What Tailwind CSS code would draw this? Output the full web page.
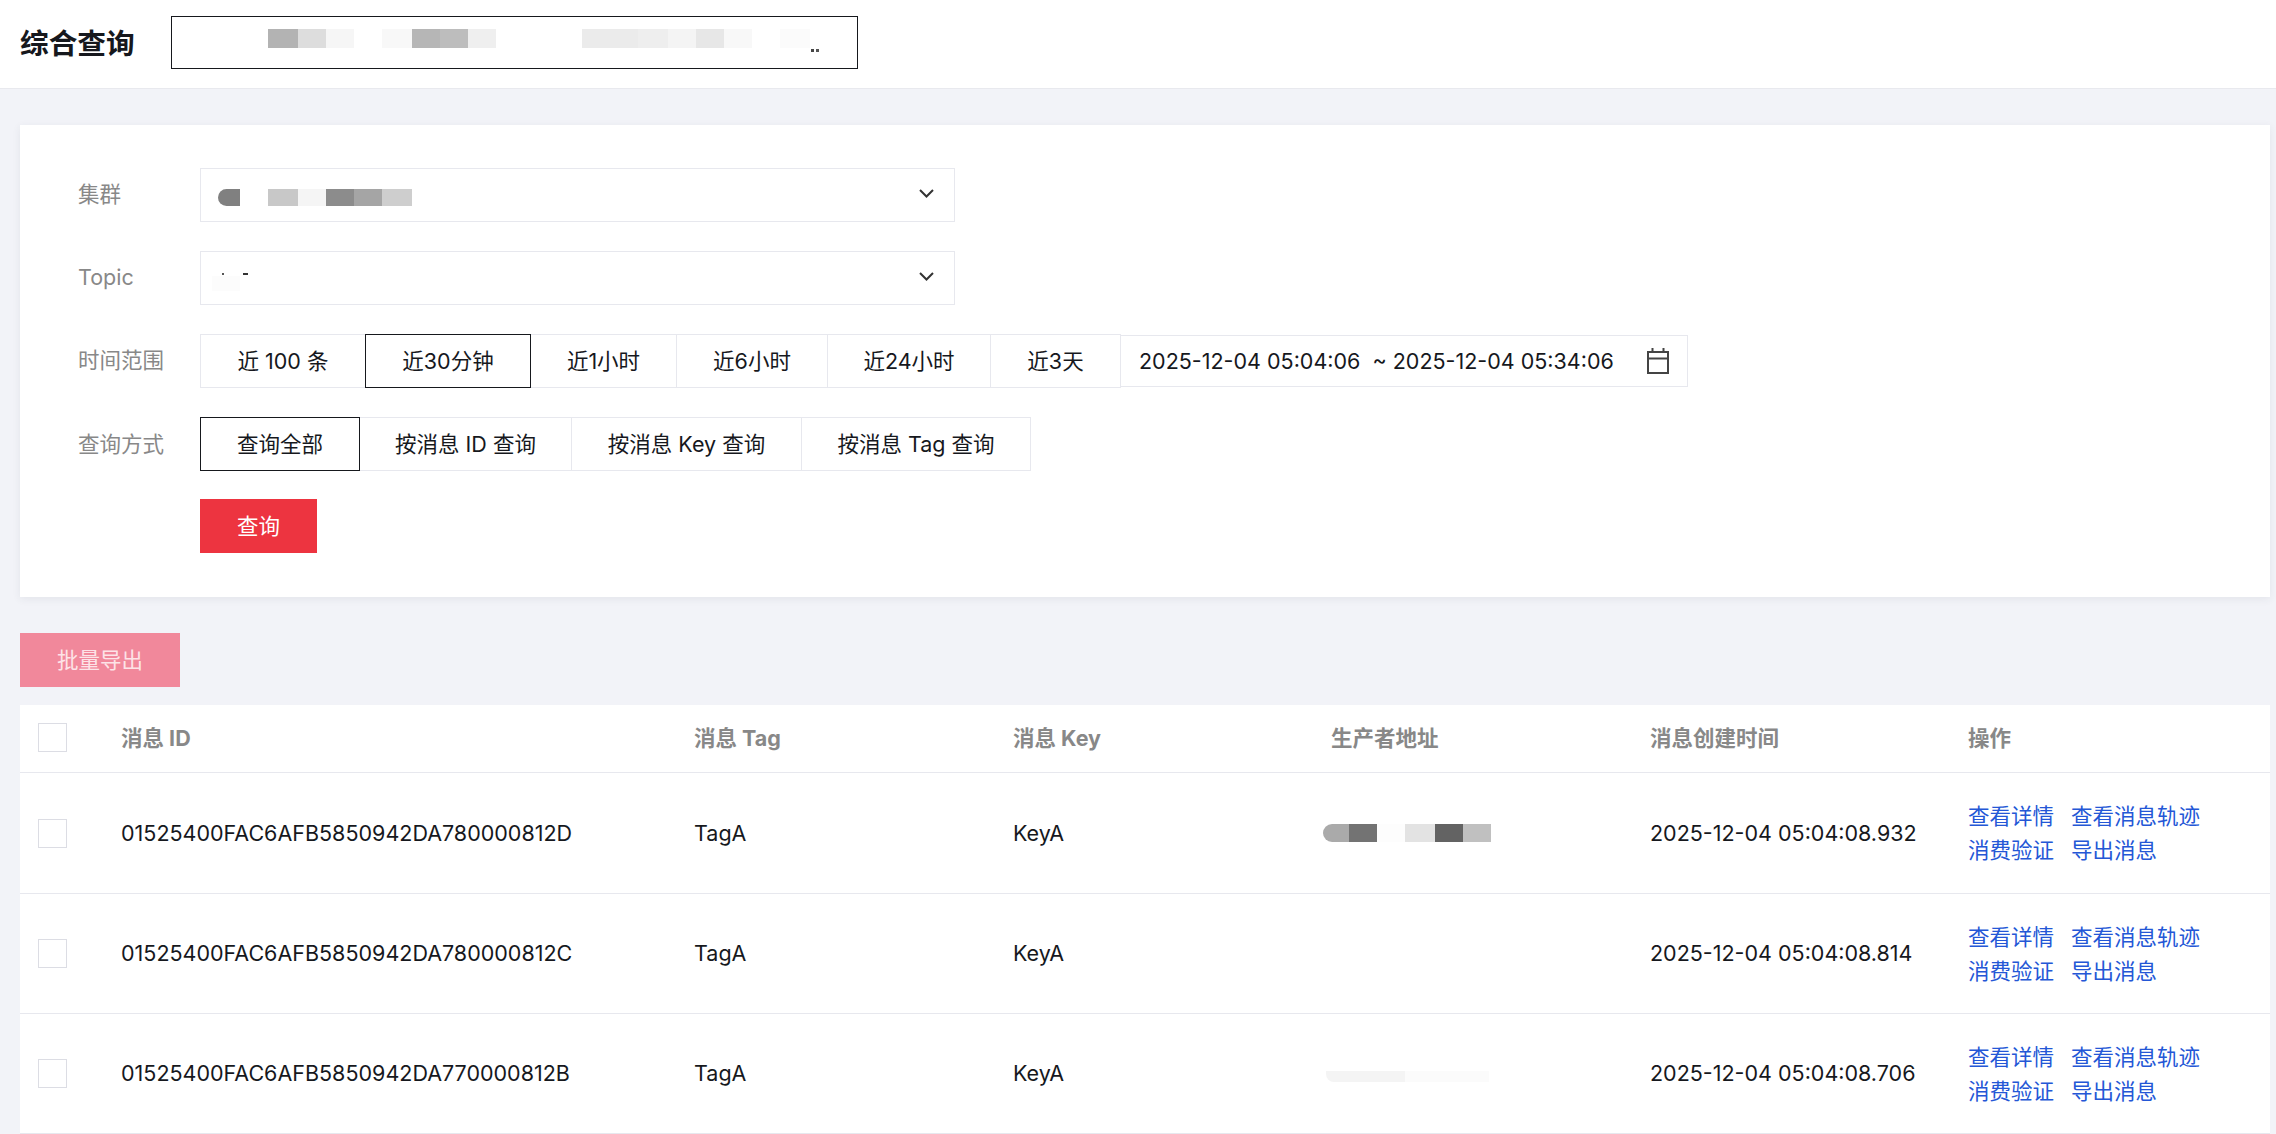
<!DOCTYPE html>
<html lang="zh-CN">
<head>
    <meta charset="UTF-8">
    <meta name="viewport" content="width=device-width, initial-scale=1.0">
    <title>综合查询</title>
    <script src="https://cdn.jsdelivr.net/npm/@tailwindcss/browser@4"></script>
</head>
<body class="bg-[#f2f3f8] h-screen overflow-hidden text-[21.5px] text-[#16181d] font-['Inter','Noto_Sans_CJK_SC',sans-serif]">
    <!-- Header -->
    <header class="h-[89px] bg-white border-b border-[#e8e9ee] pl-5 flex items-center">
        <h1 class="w-[151px] text-[28.7px] font-bold">综合查询</h1>
        <div class="relative w-[687px] h-[53px] -mt-[3px] border border-[#16181d] pl-[96px] pt-3 flex">
            <div class="flex h-[19px]">
                <div class="w-[30px] bg-[#b3b3b3]"></div>
                <div class="w-[28px] bg-[#dddddd]"></div>
                <div class="w-[28px] bg-[#f6f6f6]"></div>
                <div class="w-[28px]"></div>
                <div class="w-[30px] bg-[#f8f8f8]"></div>
                <div class="w-[28px] bg-[#b6b6b6]"></div>
                <div class="w-[28px] bg-[#bdbdbd]"></div>
                <div class="w-[28px] bg-[#efefef]"></div>
                <div class="w-[86px]"></div>
                <div class="w-[56px] bg-[#ebebeb]"></div>
                <div class="w-[30px] bg-[#eeeeee]"></div>
                <div class="w-[28px] bg-[#f4f4f4]"></div>
                <div class="w-[28px] bg-[#e7e7e7]"></div>
                <div class="w-[28px] bg-[#f8f8f8]"></div>
                <div class="w-[28px]"></div>
                <div class="w-[30px] bg-[#fbfbfb]"></div>
            </div>
            <div class="absolute left-[639px] top-[32px] w-[3px] h-[3px] bg-[#444444]"></div>
            <div class="absolute left-[644px] top-[32px] w-[3px] h-[3px] bg-[#555555]"></div>
        </div>
    </header>

    <main class="pl-5 pr-[6px] pt-[36px]">
        <!-- Query form -->
        <section class="bg-white h-[472px] pl-[58px] pt-[43px] shadow-[0_2px_8px_rgba(54,58,80,0.08)]">
            <div class="flex h-[53px] mb-[30px]">
                <label class="w-[122px] leading-[53px] text-[#888888]">集群</label>
                <div class="relative w-[755px] h-[54px] border border-[#e7e8ee] pl-[17px] pr-5 flex justify-between">
                    <div class="flex h-[17px] mt-5">
                        <div class="w-[22px] bg-[#808080] rounded-l-full"></div>
                        <div class="w-[28px]"></div>
                        <div class="w-[30px] bg-[#c8c8c8]"></div>
                        <div class="w-[28px] bg-[#f5f5f5]"></div>
                        <div class="w-[28px] bg-[#8c8c8c]"></div>
                        <div class="w-[28px] bg-[#a5a5a5]"></div>
                        <div class="w-[30px] bg-[#cecece]"></div>
                    </div>
                    <svg class="w-[15px] h-[9px] mt-5" viewBox="0 0 15 9" fill="none" stroke="#333333" stroke-width="2"><path d="M1 1l6.5 6.5L14 1"/></svg>
                </div>
            </div>
            <div class="flex h-[53px] mb-[30px]">
                <label class="w-[122px] leading-[53px] text-[#888888]">Topic</label>
                <div class="relative w-[755px] h-[54px] border border-[#e7e8ee] pl-[11px] pr-5 flex justify-between">
                    <div class="w-[28px] h-[15px] mt-6 bg-[#fcfcfc]"></div>
                    <svg class="w-[15px] h-[9px] mt-5" viewBox="0 0 15 9" fill="none" stroke="#333333" stroke-width="2"><path d="M1 1l6.5 6.5L14 1"/></svg>
                    <div class="absolute left-[21px] top-[21px] w-[2px] h-[2px] bg-[#555555]"></div>
                    <div class="absolute left-[42px] top-[21px] w-[5px] h-[2px] bg-[#333333]"></div>
                </div>
            </div>
            <div class="flex h-[53px] mb-[30px]">
                <label class="w-[122px] leading-[53px] text-[#888888]">时间范围</label>
                <div class="flex">
                    <button class="w-[166px] h-[54px] border border-[#e7e8ee]">近 100 条</button>
                    <button class="relative w-[166px] h-[54px] -ml-px border border-[#16181d]">近30分钟</button>
                    <button class="w-[147px] h-[54px] -ml-px border border-[#e7e8ee]">近1小时</button>
                    <button class="w-[152px] h-[54px] -ml-px border border-[#e7e8ee]">近6小时</button>
                    <button class="w-[164px] h-[54px] -ml-px border border-[#e7e8ee]">近24小时</button>
                    <button class="w-[131px] h-[54px] -ml-px border border-[#e7e8ee]">近3天</button>
                    <div class="w-[568px] h-[52px] mt-px -ml-px border border-[#e7e8ee] pl-[18px] pr-[17px] flex items-center justify-between">
                        <span class="whitespace-pre">2025-12-04 05:04:06  ~ 2025-12-04 05:34:06</span>
                        <svg class="w-6 h-[26px]" viewBox="0 0 24 26" fill="none" stroke="#444444" stroke-width="2"><path d="M2 4h20v21H2zM2 10.500h20M6.500 0v4M17.500 0v4"/></svg>
                    </div>
                </div>
            </div>
            <div class="flex h-[54px] mb-7">
                <label class="w-[122px] leading-[54px] text-[#888888]">查询方式</label>
                <div class="flex">
                    <button class="relative w-[160px] h-[54px] border border-[#16181d]">查询全部</button>
                    <button class="w-[213px] h-[54px] -ml-px border border-[#e7e8ee]">按消息 ID 查询</button>
                    <button class="w-[231px] h-[54px] -ml-px border border-[#e7e8ee]">按消息 Key 查询</button>
                    <button class="w-[230px] h-[54px] -ml-px border border-[#e7e8ee]">按消息 Tag 查询</button>
                </div>
            </div>
            <button class="ml-[122px] w-[117px] h-[54px] bg-[#ed3440] text-white">查询</button>
        </section>

        <button class="block mt-9 w-[160px] h-[54px] bg-[#f1889b] text-[#fde3e7]">批量导出</button>

        <!-- Results table -->
        <section class="mt-[18px] bg-white">
            <div class="grid grid-cols-[83px_573px_319px_318px_319px_318px_1fr] pl-[18px] h-[68px] items-center border-b border-[#e7e8ee] font-bold text-[#888888]">
                <div class="w-[29px] h-[29px] border border-[#dcdde4] -mt-[2px]"></div>
                <div>消息 ID</div>
                <div>消息 Tag</div>
                <div>消息 Key</div>
                <div>生产者地址</div>
                <div>消息创建时间</div>
                <div>操作</div>
            </div>

            <div class="grid grid-cols-[83px_573px_319px_318px_319px_318px_1fr] pl-[18px] h-[121px] items-center border-b border-[#e7e8ee]">
                <div class="w-[29px] h-[29px] border border-[#dcdde4]"></div>
                <div>01525400FAC6AFB5850942DA780000812D</div>
                <div>TagA</div>
                <div>KeyA</div>
                <div class="flex h-[18px] -ml-2">
                    <div class="w-[26px] bg-[#aaaaaa] rounded-l-full"></div>
                    <div class="w-[28px] bg-[#737373]"></div>
                    <div class="w-[28px] bg-[#fdfdfd]"></div>
                    <div class="w-[30px] bg-[#e3e3e3]"></div>
                    <div class="w-[28px] bg-[#636363]"></div>
                    <div class="w-[28px] bg-[#c0c0c0]"></div>
                </div>
                <div>2025-12-04 05:04:08.932</div>
                <div class="leading-[34px] text-[#2457d6]">
                    <div class="flex gap-[17px]"><a href="#">查看详情</a><a href="#">查看消息轨迹</a></div>
                    <div class="flex gap-[17px]"><a href="#">消费验证</a><a href="#">导出消息</a></div>
                </div>
            </div>

            <div class="grid grid-cols-[83px_573px_319px_318px_319px_318px_1fr] pl-[18px] h-[120px] items-center border-b border-[#e7e8ee]">
                <div class="w-[29px] h-[29px] border border-[#dcdde4]"></div>
                <div>01525400FAC6AFB5850942DA780000812C</div>
                <div>TagA</div>
                <div>KeyA</div>
                <div></div>
                <div>2025-12-04 05:04:08.814</div>
                <div class="leading-[34px] text-[#2457d6]">
                    <div class="flex gap-[17px]"><a href="#">查看详情</a><a href="#">查看消息轨迹</a></div>
                    <div class="flex gap-[17px]"><a href="#">消费验证</a><a href="#">导出消息</a></div>
                </div>
            </div>

            <div class="grid grid-cols-[83px_573px_319px_318px_319px_318px_1fr] pl-[18px] h-[120px] items-center border-b border-[#e7e8ee]">
                <div class="w-[29px] h-[29px] border border-[#dcdde4]"></div>
                <div>01525400FAC6AFB5850942DA770000812B</div>
                <div>TagA</div>
                <div>KeyA</div>
                <div class="flex h-[11px] -ml-[5px] mt-[5px]">
                    <div class="w-[79px] bg-[#f4f4f4] rounded-bl-lg"></div>
                    <div class="w-[84px] bg-[#fbfbfb]"></div>
                </div>
                <div>2025-12-04 05:04:08.706</div>
                <div class="leading-[34px] text-[#2457d6]">
                    <div class="flex gap-[17px]"><a href="#">查看详情</a><a href="#">查看消息轨迹</a></div>
                    <div class="flex gap-[17px]"><a href="#">消费验证</a><a href="#">导出消息</a></div>
                </div>
            </div>
        </section>
    </main>
</body>
</html>
